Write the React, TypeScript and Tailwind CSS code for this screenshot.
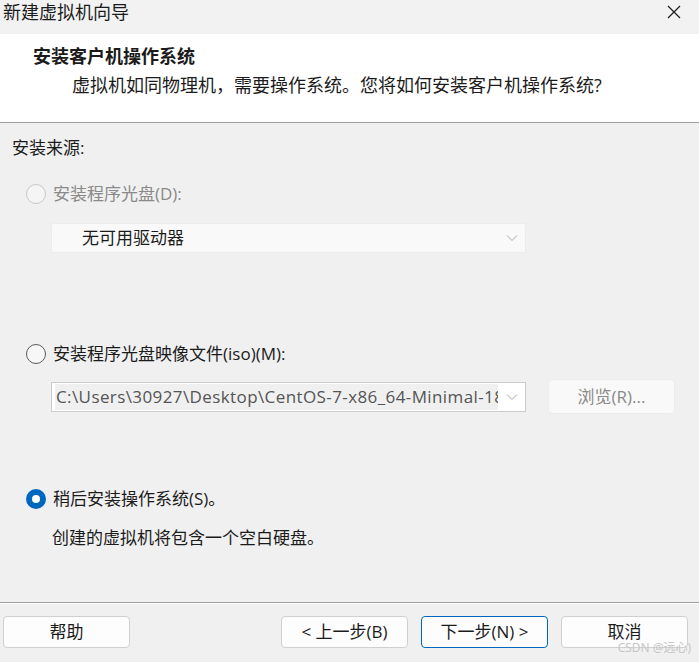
import React from "react";

const font = { fontFamily: '"Open Sans", "Noto Sans CJK SC", sans-serif' };

function Radio({ checked, disabled }: { checked?: boolean; disabled?: boolean }) {
  if (checked) {
    return (
      <span className="w-[20px] h-[20px] rounded-full bg-[#0067c0] flex items-center justify-center shrink-0">
        <span className="w-[8px] h-[8px] rounded-full bg-white" />
      </span>
    );
  }
  return (
    <span
      className={
        "w-[20px] h-[20px] rounded-full border shrink-0 " +
        (disabled ? "border-[#c8c8c8] bg-[#f5f5f5]" : "border-[#5a5a5a] bg-[#f7f7f7]")
      }
    />
  );
}

function Chevron() {
  return (
    <svg width="12" height="8" viewBox="0 0 12 8" className="shrink-0">
      <path d="M1 1.5 L6 6.5 L11 1.5" fill="none" stroke="#a8a8a8" strokeWidth="1" />
    </svg>
  );
}

function Btn({ label, primary }: { label: string; primary?: boolean }) {
  return (
    <button
      className={
        "w-[127px] h-[32px] rounded-[4px] bg-[#fdfdfd] text-[17px] text-[#1b1b1b] flex items-center justify-center " +
        (primary ? "border border-[#0067c0]" : "border border-[#d0d0d0]")
      }
    >
      {label}
    </button>
  );
}

export default function App() {
  return (
    <div className="w-[699px] h-[662px] bg-[#f0f0f0] flex flex-col overflow-hidden text-[#1b1b1b]" style={font}>
      {/* Title bar */}
      <div className="h-[34px] bg-[#f2f2f2] flex items-center justify-between pl-[3px] pr-[18px]">
        <span className="text-[18px] leading-none -mt-[10px]">新建虚拟机向导</span>
        <svg width="14" height="14" viewBox="0 0 14 14" className="-mt-[10px]">
          <path d="M1 1 L13 13 M13 1 L1 13" stroke="#1b1b1b" strokeWidth="1.2" />
        </svg>
      </div>

      {/* Header */}
      <div className="h-[89px] bg-white border-b border-[#a0a0a0] pt-[10px]">
        <div className="pl-[33px] text-[18px] font-bold leading-[24px]">安装客户机操作系统</div>
        <div className="pl-[72px] text-[18px] leading-[24px] mt-[5px]">
          虚拟机如同物理机，需要操作系统。您将如何安装客户机操作系统?
        </div>
      </div>

      {/* Body */}
      <div className="flex-1 flex flex-col pl-[12px] pt-[13px] text-[17px]">
        <div className="leading-[24px]">安装来源:</div>

        <div className="flex items-center gap-[7px] ml-[14px] mt-[22px] h-[24px]">
          <Radio disabled />
          <span className="text-[#8a8a8a]">安装程序光盘(D):</span>
        </div>
        <div className="ml-[39px] mt-[17px] w-[475px] h-[30px] bg-[#f9f9f9] border border-[#ececec] rounded-[2px] flex items-center justify-between pl-[30px] pr-[7px]">
          <span>无可用驱动器</span>
          <Chevron />
        </div>

        <div className="flex items-center gap-[7px] ml-[14px] mt-[89px] h-[24px]">
          <Radio />
          <span>安装程序光盘映像文件(iso)(M):</span>
        </div>
        <div className="flex items-center mt-[13px]">
          <div className="ml-[39px] w-[475px] h-[30px] bg-white border border-[#cccccc] flex items-center justify-between pl-[3px] pr-[7px]">
            <span className="bg-[#f0f0f0] w-[443px] h-[26px] overflow-hidden whitespace-nowrap text-[17px] tracking-[0.4px] leading-[26px] text-[#555555] pl-[1px]">
              C:\Users\30927\Desktop\CentOS-7-x86_64-Minimal-1804.iso
            </span>
            <Chevron />
          </div>
          <div className="ml-[22px] w-[127px] h-[35px] rounded-[4px] bg-[#f9f9f9] border border-[#ececec] flex items-center justify-center text-[#8a8a8a]">
            浏览(R)...
          </div>
        </div>

        <div className="flex items-center gap-[7px] ml-[14px] mt-[73px] h-[24px]">
          <Radio checked />
          <span>稍后安装操作系统(S)。</span>
        </div>
        <div className="ml-[40px] mt-[15px] leading-[24px]">创建的虚拟机将包含一个空白硬盘。</div>
      </div>

      {/* Footer */}
      <div className="h-[60px] border-t border-[#a0a0a0] relative">
        <div className="border-t border-white" />
        <div className="flex items-center pl-[3px] pt-[12px]">
          <Btn label="帮助" />
          <div className="ml-[151px] flex gap-[13px]">
            <Btn label="< 上一步(B)" />
            <Btn label="下一步(N) >" primary />
            <Btn label="取消" />
          </div>
        </div>
        <span className="absolute right-[8px] bottom-[8px] text-[12px] text-[#c4c4c4] leading-none">CSDN @远心)</span>
      </div>
    </div>
  );
}
